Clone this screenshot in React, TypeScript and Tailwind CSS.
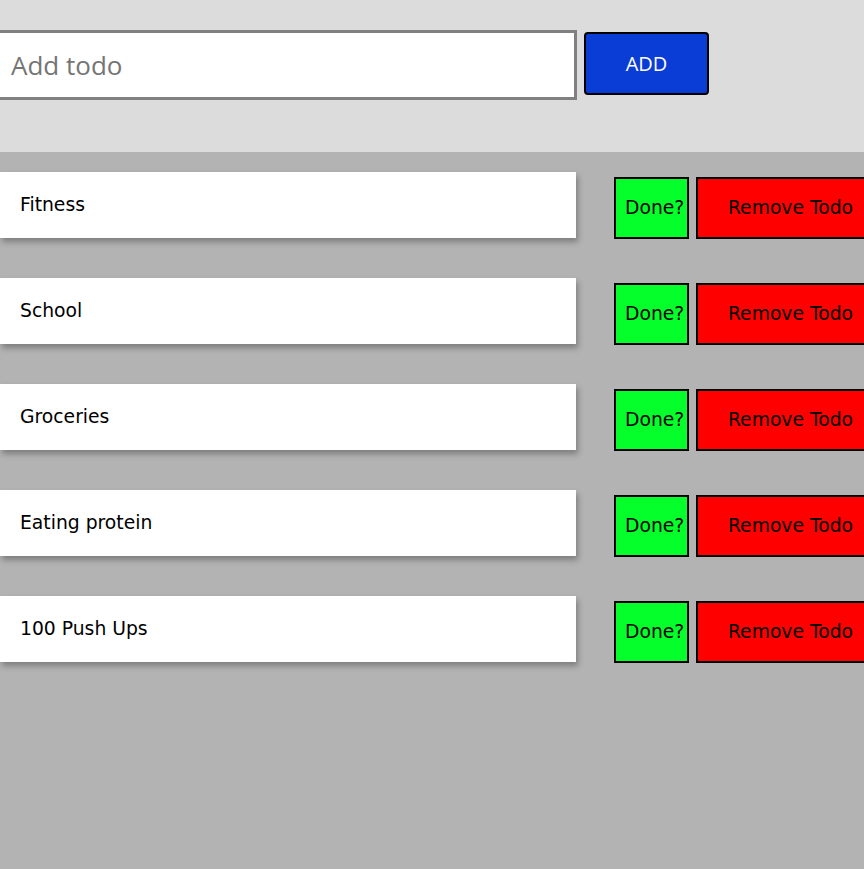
import { useState } from "react";

const initialTodos = ["Fitness", "School", "Groceries", "Eating protein", "100 Push Ups"];

export default function App() {
  const [todos, setTodos] = useState(initialTodos);
  const [text, setText] = useState("");

  const addTodo = () => {
    if (!text.trim()) return;
    setTodos([...todos, text]);
    setText("");
  };

  return (
    <div className="min-h-screen w-full overflow-hidden bg-[#b3b3b3] font-['DejaVu_Sans',sans-serif] text-black">
      <div className="flex h-[152px] items-start bg-[#dcdcdc] pt-[30px]">
        <input
          value={text}
          onChange={(e) => setText(e.target.value)}
          placeholder="Add todo"
          className="-ml-[13px] h-[70px] w-[590px] shrink-0 border-[3px] border-[#808080] bg-white pl-[21px] font-['Open_Sans',sans-serif] text-[26px] text-black outline-none placeholder:text-[#757575]"
        />
        <button
          onClick={addTodo}
          className="ml-[7px] mt-[2px] h-[63px] w-[125px] shrink-0 rounded-[4px] border-2 border-black bg-[#0a3cd6] font-['Open_Sans',sans-serif] text-[20px] text-white"
        >
          ADD
        </button>
      </div>
      <ul className="flex flex-col gap-[39px] pt-[20px]">
        {todos.map((todo, i) => (
          <li key={i} className="flex items-start">
            <div className="flex h-[66px] w-[576px] shrink-0 items-center bg-white pl-[20px] pt-px text-[18.75px] shadow-[2px_4px_6px_rgba(0,0,0,0.3)]">
              {todo}
            </div>
            <button className="ml-[38px] mt-[5px] h-[62px] w-[75px] shrink-0 overflow-hidden whitespace-nowrap border-2 border-black bg-[#05ff2b] pl-[9px] text-left text-[18.75px]">
              Done?
            </button>
            <button
              onClick={() => setTodos(todos.filter((_, j) => j !== i))}
              className="ml-[7px] mt-[5px] h-[62px] w-[189px] shrink-0 border-2 border-black bg-[#ff0000] text-[18.75px]"
            >
              Remove Todo
            </button>
          </li>
        ))}
      </ul>
    </div>
  );
}
